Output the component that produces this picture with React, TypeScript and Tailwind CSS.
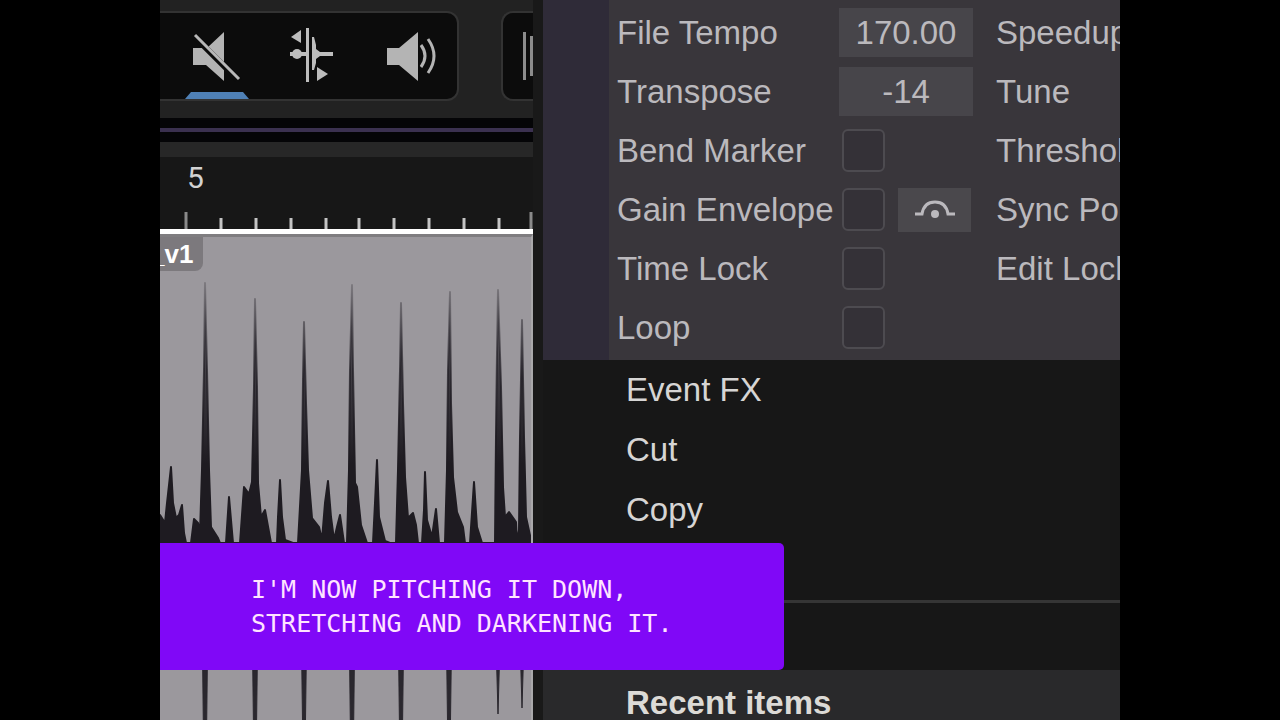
import type { ReactNode } from 'react';
import clsx from 'clsx';

const WAVE_TOP =
  'M0 281 L5 289 L7 269 L11 233 L13 269 L16 284 L19 281 L22 271 L24 299 L26 309 L31 309 L34 285 L38 289 L40 299 L42 236 L44 136 L45 49 L47 136 L49 236 L51 293 L58 304 L60 309 L66 309 L69 263 L73 309 L80 309 L84 253 L89 260 L92 248 L94 153 L95 65 L97 153 L98 249 L101 283 L105 276 L111 309 L117 309 L118 283 L120 246 L122 283 L125 306 L133 309 L138 309 L142 236 L143 146 L144 88 L146 169 L148 236 L152 284 L159 293 L162 306 L165 269 L168 247 L171 283 L174 306 L177 293 L180 281 L184 309 L187 309 L189 236 L190 136 L192 51 L193 136 L195 249 L197 253 L201 291 L207 309 L213 309 L215 269 L217 226 L219 283 L221 291 L225 307 L230 309 L236 309 L238 236 L240 136 L241 69 L243 169 L245 243 L248 284 L253 279 L256 291 L258 309 L262 309 L264 276 L265 238 L267 286 L272 303 L276 275 L279 309 L285 309 L287 236 L288 136 L290 58 L291 169 L293 243 L297 278 L303 293 L305 309 L310 309 L314 248 L317 293 L322 309 L335 309 L336 203 L337 119 L338 56 L341 153 L343 253 L345 283 L349 278 L356 288 L357 309 L359 296 L360 203 L362 86 L364 203 L366 283 L371 306 L371 372 L0 372 Z';

// x position and tip of every spike in the lower half
const LOWER_SPIKES = [
  [45, 640],
  [95, 620],
  [144, 600],
  [192, 640],
  [241, 620],
  [289, 600],
  [338, 480],
  [362, 474],
];

const TICKS = [26, 61, 96, 131, 166, 199, 234, 269, 304, 339, 371];

const MENU_ITEMS = ['Event FX', 'Cut', 'Copy'];

function MuteIcon() {
  return (
    <svg width="52" height="52" viewBox="0 0 52 52" aria-hidden="true">
      <path d="M2 18h14L33 2v49L15 35H2Z" fill="#b4b4b4" />
      <path d="M2 5l46 46" stroke="#0c0c0c" strokeWidth="6" />
      <path d="M4 5l44 44" stroke="#b8b8b8" strokeWidth="3" />
    </svg>
  );
}

function SplitIcon() {
  return (
    <svg width="52" height="56" viewBox="0 0 52 56" aria-hidden="true">
      <g fill="#bdbdbd">
        <path d="M4 9l10-7v13Z" />
        <path d="M30 39v14l11-7Z" />
        <path d="M19 0h3v54h-3Z" />
        <path d="M25 9h2l2 8v4l4 3h13v4H33l-4 3v4l-2 7h-2Z" />
        <path d="M3 24h16v4H3Z" />
        <ellipse cx="10" cy="26" rx="5" ry="5" />
      </g>
    </svg>
  );
}

function SpeakerIcon() {
  return (
    <svg width="56" height="52" viewBox="0 0 56 52" aria-hidden="true">
      <path d="M6 18h12L37 2v49L18 35H6Z" fill="#b4b4b4" />
      <path d="M40 15q8 11 0 22" fill="none" stroke="#b4b4b4" strokeWidth="3" />
      <path d="M47 9q12 17 0 34" fill="none" stroke="#b4b4b4" strokeWidth="3" />
    </svg>
  );
}

function EnvelopeIcon() {
  return (
    <svg width="42" height="24" viewBox="0 0 42 24" aria-hidden="true">
      <path
        d="M1 16h7q2-12 13-12t13 12h7"
        fill="none"
        stroke="#bbb9bd"
        strokeWidth="3"
      />
      <circle cx="21" cy="16" r="4" fill="#bbb9bd" />
    </svg>
  );
}

function ToolButton({
  label,
  active,
  children,
}: {
  label: string;
  active?: boolean;
  children: ReactNode;
}) {
  return (
    <button
      aria-label={label}
      className="relative flex w-24 items-center justify-center"
    >
      {children}
      {active && (
        <svg
          className="absolute bottom-0 left-4"
          width="64"
          height="8"
          viewBox="0 0 64 8"
          aria-hidden="true"
        >
          <path d="M0 8L6 1h52l6 7Z" fill="#4f80b5" />
        </svg>
      )}
    </button>
  );
}

function Toolbar() {
  return (
    <div className="flex h-[118px] gap-[42px] bg-[#222222] pt-[11px]">
      <div className="flex h-[90px] shrink-0 rounded-r-xl border-2 border-l-0 border-[#333333] bg-[#0c0c0c] pl-[9px]">
        <ToolButton label="Mute" active>
          <MuteIcon />
        </ToolButton>
        <ToolButton label="Split">
          <SplitIcon />
        </ToolButton>
        <ToolButton label="Listen">
          <SpeakerIcon />
        </ToolButton>
      </div>
      <div className="flex h-[90px] flex-1 items-center gap-1 rounded-l-xl border-2 border-r-0 border-[#333333] bg-[#0c0c0c] pl-5">
        <div className="h-12 w-[3px] bg-[#8c8c8c]" />
        <div className="h-10 w-[3px] bg-[#8c8c8c]" />
      </div>
    </div>
  );
}

function Ruler() {
  return (
    <div className="flex h-[72px] flex-col justify-between bg-[#171717]">
      <div className="pt-[3px] pl-[27px] font-['Roboto',sans-serif] text-[30px] leading-9 text-[#d2d2d2]">
        5
      </div>
      <svg width="373" height="17" viewBox="0 0 373 17" aria-hidden="true">
        {TICKS.map((x, i) => (
          <path
            key={x}
            d={`M${x} ${i % 10 === 0 ? 0 : 6}V17`}
            stroke={i % 10 === 0 ? '#8a8a8a' : '#c4c4c4'}
            strokeWidth="3"
          />
        ))}
      </svg>
    </div>
  );
}

function Track() {
  return (
    <div className="relative min-h-0 flex-1 overflow-hidden border-t-[3px] border-r-2 border-t-[#7f7d80] border-r-[#aaa9ab] bg-[#9b989d]">
      <svg
        className="-mt-[3px] block"
        width="373"
        height="486"
        viewBox="0 0 373 486"
        aria-hidden="true"
      >
        <defs>
          <linearGradient id="fade" gradientUnits="userSpaceOnUse" x1="0" y1="50" x2="0" y2="230">
            <stop offset="0" stopColor="#211e25" stopOpacity="0.25" />
            <stop offset="0.5" stopColor="#211e25" stopOpacity="0.75" />
            <stop offset="1" stopColor="#1e1b21" />
          </linearGradient>
        </defs>
        <path
          d={WAVE_TOP}
          fill="url(#fade)"
          stroke="url(#fade)"
          strokeWidth="2"
          strokeLinejoin="round"
        />
        {LOWER_SPIKES.map(([x, tip]) => (
          <path key={x} d={`M${x - 3} 372h6L${x} ${tip}Z`} fill="#2a272e" stroke="#2a272e" />
        ))}
      </svg>
      <span className="absolute top-0 left-0 rounded-br-lg bg-[#7c797d] pr-2.5 text-[26px] leading-[34px] font-bold text-white">
        <span className="-ml-2.5">_v1</span>
      </span>
    </div>
  );
}

function Row({ children, side }: { children: ReactNode; side?: string }) {
  return (
    <div className="flex h-[59px] items-center whitespace-nowrap">
      <div className="flex w-[379px] shrink-0 items-center">{children}</div>
      <span>{side}</span>
    </div>
  );
}

function NumberRow({ label, value, side }: { label: string; value: string; side: string }) {
  const id = label.replace(' ', '-').toLowerCase();
  return (
    <Row side={side}>
      <label htmlFor={id} className="w-[222px]">
        {label}
      </label>
      <input
        id={id}
        defaultValue={value}
        className="h-[49px] w-[134px] bg-[#47454a] text-center text-[#bbb9bd]"
      />
    </Row>
  );
}

function CheckRow({
  label,
  side,
  children,
}: {
  label: string;
  side?: string;
  children?: ReactNode;
}) {
  const id = label.replace(' ', '-').toLowerCase();
  return (
    <Row side={side}>
      <label htmlFor={id} className="w-[225px]">
        {label}
      </label>
      <input
        id={id}
        type="checkbox"
        className="size-[43px] appearance-none rounded-md border-2 border-[#4d4b50] bg-[#343137]"
      />
      {children}
    </Row>
  );
}

function EventPanel() {
  return (
    <div className="flex bg-[#39363b] text-[33px] leading-10 text-[#bbb9bd]">
      <div className="w-[66px] shrink-0 bg-[#2f2b38]" />
      <div className="min-w-0 flex-1 overflow-hidden pt-[3px] pb-[3px] pl-2">
        <NumberRow label="File Tempo" value="170.00" side="Speedup" />
        <NumberRow label="Transpose" value="-14" side="Tune" />
        <CheckRow label="Bend Marker" side="Threshold" />
        <CheckRow label="Gain Envelope" side="Sync Point">
          <button
            aria-label="Edit envelope"
            className="ml-[13px] flex h-11 w-[73px] items-center justify-center bg-[#4a484c]"
          >
            <EnvelopeIcon />
          </button>
        </CheckRow>
        <CheckRow label="Time Lock" side="Edit Lock" />
        <CheckRow label="Loop" />
      </div>
    </div>
  );
}

function ContextMenu() {
  return (
    <div className="flex min-w-0 flex-1 flex-col border-l-[10px] border-[#191919] bg-[#171717]">
      <EventPanel />
      <div className="flex flex-col text-[33px] leading-10 text-[#d6d5d4]">
        {MENU_ITEMS.map((item) => (
          <button key={item} className="h-[60px] pl-[83px] text-left">
            {item}
          </button>
        ))}
      </div>
      <hr className="mt-[60px] border-t-[3px] border-[#353535]" />
      <h2 className="mt-[67px] flex-1 bg-[#29292b] pt-[13px] pl-[83px] text-[33px] leading-10 font-bold text-[#dcdad6]">
        Recent items
      </h2>
    </div>
  );
}

export default function App() {
  return (
    <div className="h-screen overflow-hidden bg-black font-['Liberation_Sans',Arial,sans-serif]">
      <main className="relative mx-auto flex h-full w-3/4 overflow-hidden">
        <div className="flex w-[373px] shrink-0 flex-col overflow-hidden">
          <Toolbar />
          <div className="flex h-6 items-center bg-[#050507]">
            <div className="h-1 w-full bg-[#3b3150]" />
          </div>
          <div className="h-[15px] bg-[#272727]" />
          <Ruler />
          <div className="h-[5px] bg-white" />
          <Track />
        </div>
        <ContextMenu />
        <p
          className={clsx(
            'absolute bottom-[50px] left-0 w-[65%] rounded-r-[5px] bg-[#8008f7] pt-[30px] pb-[29px] pl-[91px]',
            "font-['DejaVu_Sans_Mono',monospace] text-[25px] leading-[34px] text-[#ffe4ff]"
          )}
        >
          I'M NOW PITCHING IT DOWN,
          <br />
          STRETCHING AND DARKENING IT.
        </p>
      </main>
    </div>
  );
}
